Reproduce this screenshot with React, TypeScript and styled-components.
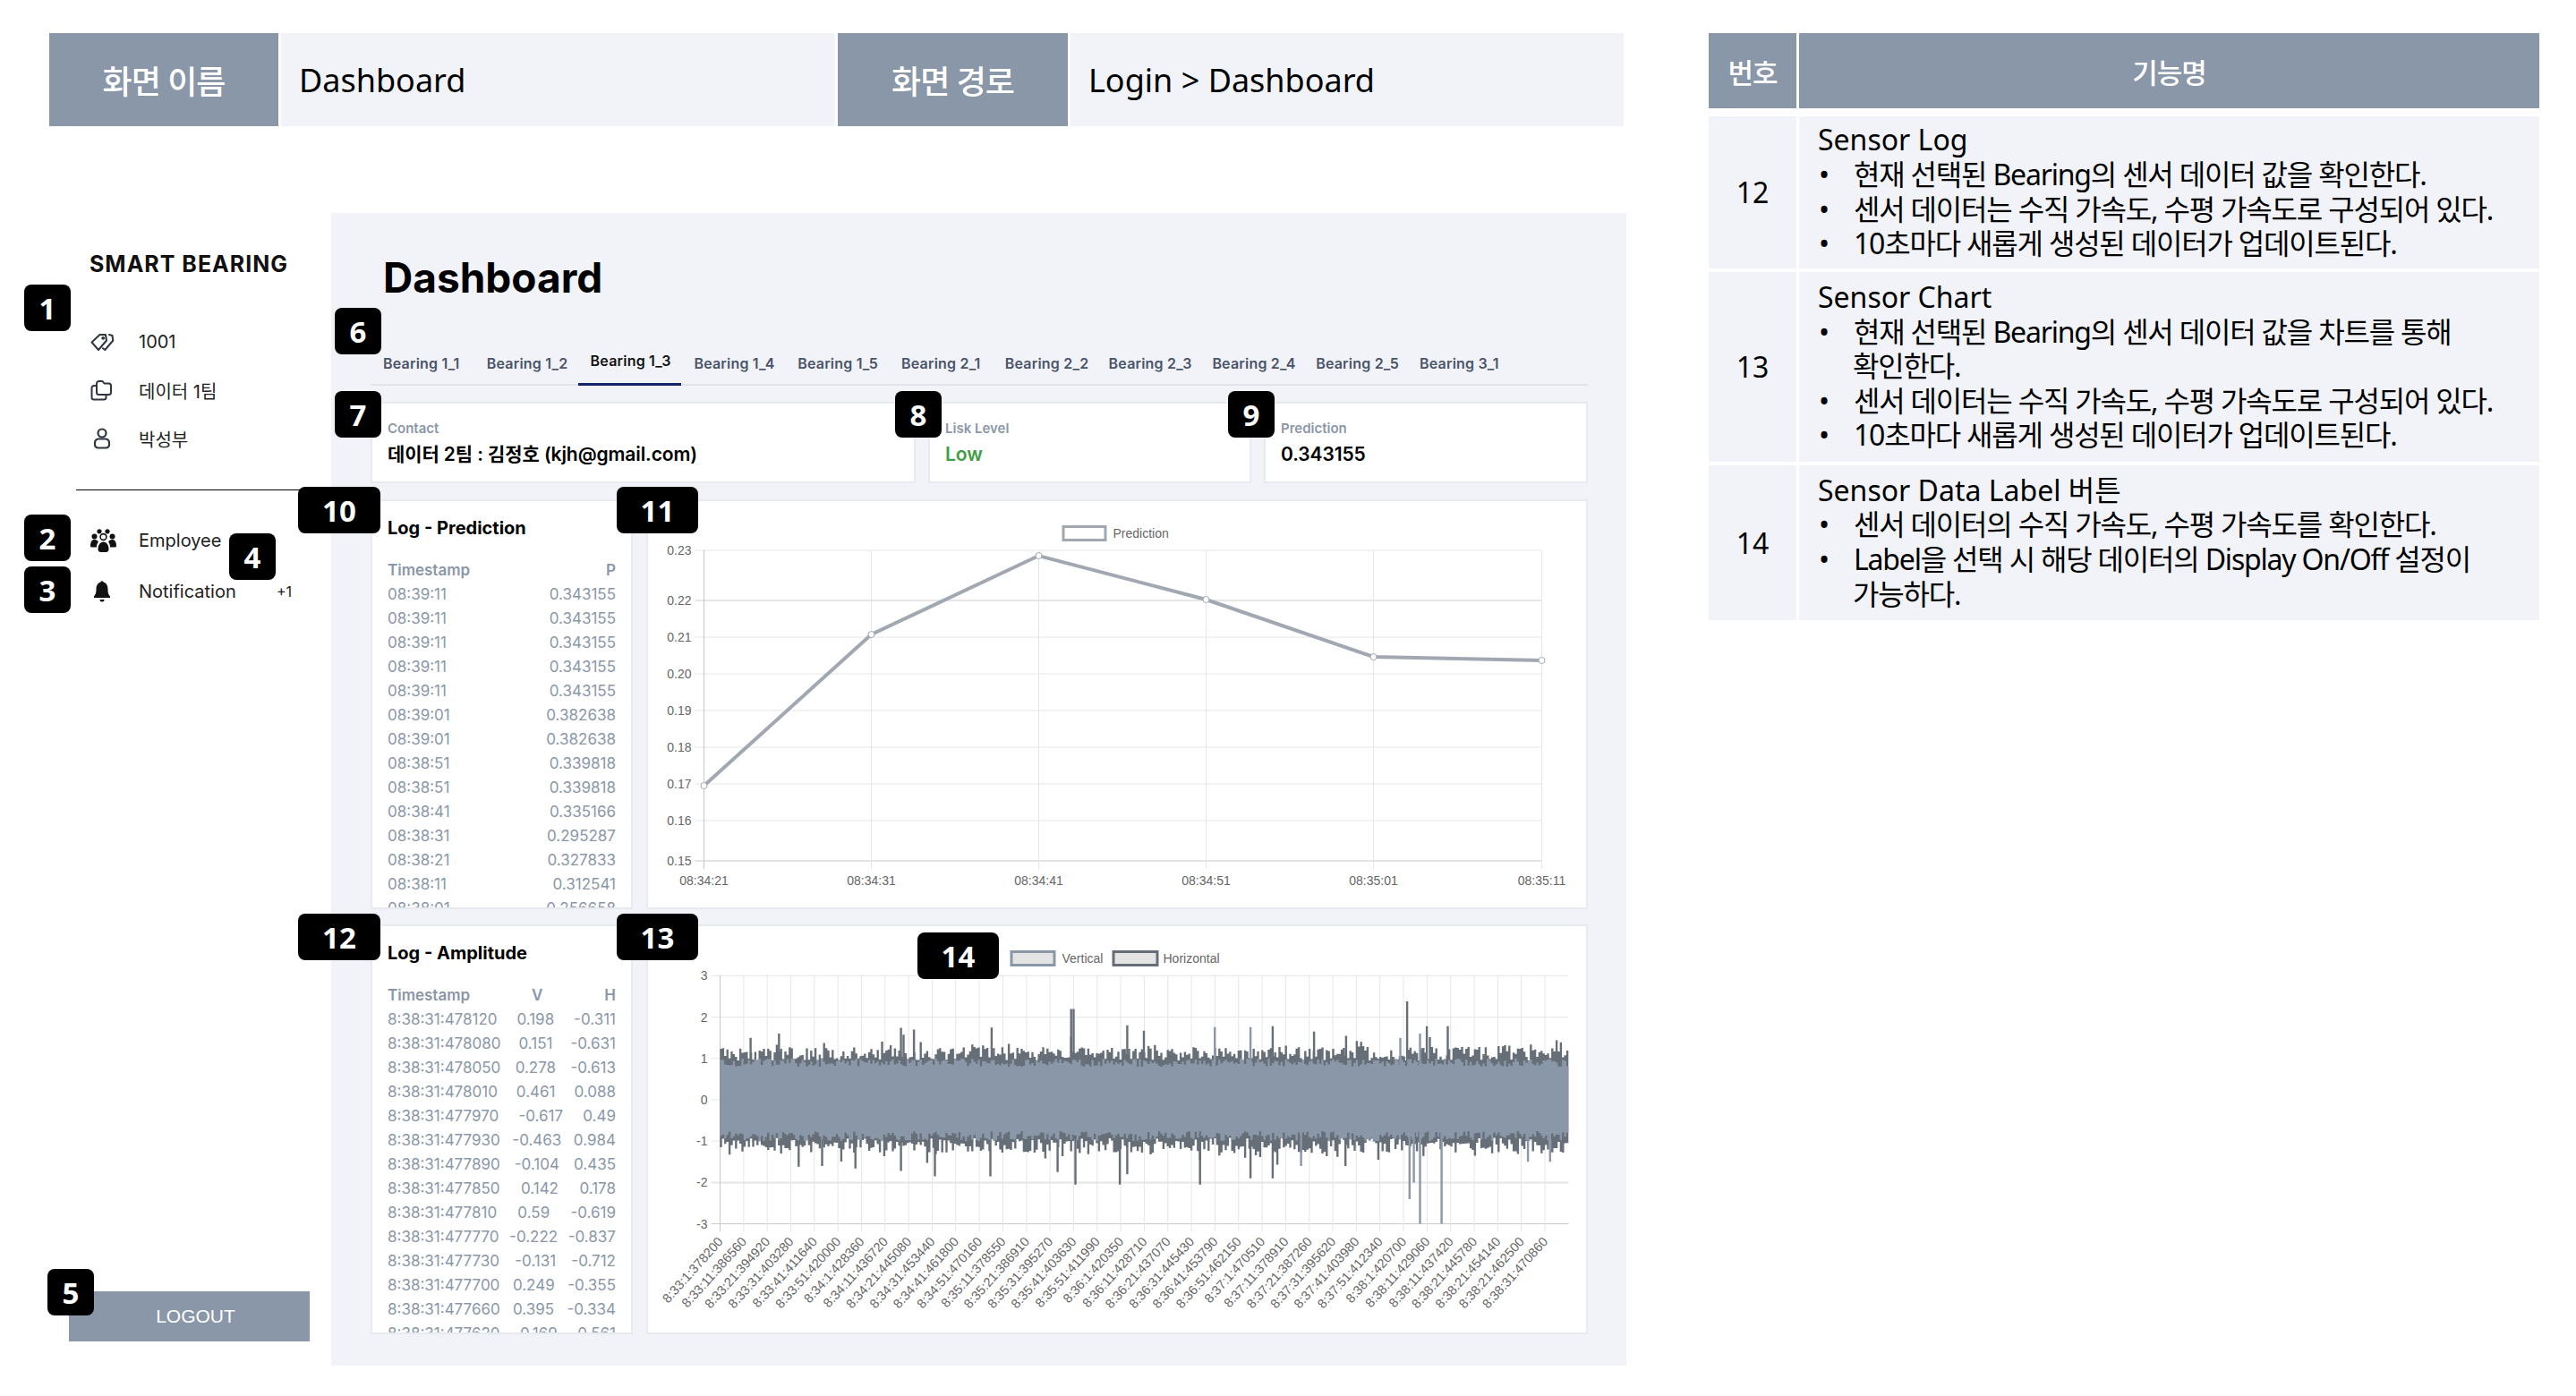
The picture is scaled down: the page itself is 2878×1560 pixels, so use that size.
import React from 'react'
import styled, { createGlobalStyle } from 'styled-components'

const GlobalStyle = createGlobalStyle`
  html, body {
    margin: 0;
    padding: 0;
    background: #ffffff;
  }
  * {
    box-sizing: border-box;
  }
`

const UI_FONT = `Inter, "Noto Sans CJK KR", sans-serif`
const DOC_FONT = `"Noto Sans", "Noto Sans CJK KR", sans-serif`
const SLATE = '#8a97a8'
const PALE = '#f1f3f9'

const Page = styled.div`
  position: relative;
  width: 2878px;
  height: 1560px;
  overflow: hidden;
  display: flex;
  gap: 93px;
  padding: 37px 41px 0 55px;
  background: #ffffff;
  color: #000000;
  font-family: ${UI_FONT};
`

const LeftColumn = styled.div`
  width: 1761px;
  display: flex;
  flex-direction: column;
`

const ScreenHeader = styled.div`
  display: grid;
  grid-template-columns: 256px 619px 257px 618px;
  gap: 3px;
  height: 104px;
`

const HeaderLabel = styled.div`
  background: ${SLATE};
  color: #ffffff;
  font-family: ${DOC_FONT};
  font-size: 36px;
  font-weight: 500;
  letter-spacing: -1px;
  display: flex;
  align-items: center;
  justify-content: center;
`

const HeaderValue = styled.div`
  background: ${PALE};
  font-family: ${DOC_FONT};
  font-size: 36px;
  padding-left: 20px;
  display: flex;
  align-items: center;
`

const Body = styled.div`
  margin-top: 97px;
  display: flex;
  height: 1288px;
`

const Sidebar = styled.aside`
  width: 315px;
  flex: none;
  display: flex;
  flex-direction: column;
  color: #222222;
`

const Logo = styled.div`
  margin: 47px 0 0 45px;
  font-size: 25px;
  line-height: 20px;
  font-weight: 700;
  letter-spacing: 1px;
  white-space: nowrap;
  color: #111111;
`

const InfoList = styled.div`
  margin: 50px 0 0 46px;
`

const SideRow = styled.div<{ $height: number }>`
  height: ${({ $height }) => $height}px;
  display: flex;
  align-items: center;
  font-size: 20px;
`

const IconSlot = styled.span`
  width: 54px;
  flex: none;
  display: flex;
  align-items: center;
`

const Divider = styled.div`
  height: 1px;
  margin: 30px 0 27px 30px;
  background: #000000;
`

const NavList = styled.nav`
  margin-left: 46px;
`

const Count = styled.span`
  margin-left: auto;
  margin-right: 44px;
  font-size: 16px;
`

const LogoutButton = styled.button`
  margin: auto 24px 27px 22px;
  height: 56px;
  padding: 0 0 0 14px;
  border: 0;
  background: ${SLATE};
  color: #ffffff;
  font-family: "Liberation Sans", sans-serif;
  font-size: 21px;
`

const Main = styled.main`
  flex: 1;
  background: ${PALE};
  padding: 44px 43px 0 44px;
  display: flex;
  flex-direction: column;
`

const Title = styled.h1`
  margin: 0;
  font-size: 46px;
  line-height: 56px;
  font-weight: 700;
  padding-left: 14px;
`

const Tabs = styled.div`
  margin-top: 44px;
  height: 49px;
  display: flex;
  border-bottom: 2px solid #e1e4e9;
`

const Tab = styled.div<{ $active?: boolean }>`
  width: 115.8px;
  flex: none;
  padding: ${({ $active }) => ($active ? '11px 0 0 14px' : '14px 0 0 14px')};
  height: ${({ $active }) => ($active ? '49px' : '47px')};
  font-size: 16px;
  line-height: 20px;
  font-weight: 600;
  letter-spacing: 0.2px;
  white-space: nowrap;
  color: ${({ $active }) => ($active ? '#111111' : '#4a5568')};
  border-bottom: ${({ $active }) => ($active ? '3px solid #14246a' : '0')};
`

const CardRow = styled.div`
  margin-top: 18px;
  display: flex;
  gap: 14px;
`

const InfoCard = styled.div<{ $width: number }>`
  width: ${({ $width }) => $width}px;
  height: 91px;
  background: #ffffff;
  border: 2px solid #e7eaef;
  padding: 19px 0 0 17px;
`

const InfoLabel = styled.div`
  font-size: 15px;
  line-height: 18px;
  font-weight: 600;
  color: ${SLATE};
`

const InfoValue = styled.div<{ $color?: string }>`
  margin-top: 7px;
  font-size: 21px;
  line-height: 26px;
  font-weight: 600;
  letter-spacing: -0.1px;
  color: ${({ $color }) => $color || '#000000'};
`

const PanelRow = styled.div<{ $top: number }>`
  margin-top: ${({ $top }) => $top}px;
  height: 458px;
  display: flex;
  gap: 15px;
`

const LogCard = styled.section`
  width: 293px;
  flex: none;
  background: #ffffff;
  border: 2px solid #e7eaef;
  padding: 17px 17px 0;
  overflow: hidden;
`

const LogTitle = styled.h2`
  margin: 0 0 21px;
  font-size: 20px;
  line-height: 26px;
  font-weight: 700;
`

const LogRow = styled.div<{ $head?: boolean }>`
  display: flex;
  justify-content: space-between;
  height: 27px;
  line-height: 27px;
  white-space: nowrap;
  font-size: 17px;
  font-weight: ${({ $head }) => ($head ? 600 : 400)};
  color: ${SLATE};
`

const ChartCard = styled.section`
  flex: 1;
  background: #ffffff;
  border: 2px solid #e7eaef;
  overflow: hidden;
`

const ChartSvg = styled.svg`
  display: block;
  width: 100%;
  height: 100%;
`

const AxisText = styled.text<{ $size?: number }>`
  font-family: "Liberation Sans", sans-serif;
  font-size: ${({ $size }) => $size || 14}px;
  fill: #666666;
`

const SpecColumn = styled.div`
  width: 928px;
  display: grid;
  grid-template-columns: 98px 827px;
  column-gap: 3px;
  row-gap: 4px;
  grid-template-rows: 88.5px 170px 212px 173px;
  font-family: ${DOC_FONT};
  align-content: start;
`

const SpecHead = styled.div`
  background: ${SLATE};
  color: #ffffff;
  font-size: 31px;
  font-weight: 500;
  letter-spacing: -1px;
  margin-bottom: 4.5px;
  display: flex;
  align-items: center;
  justify-content: center;
`

const SpecNumber = styled.div`
  background: ${PALE};
  font-size: 32px;
  display: flex;
  align-items: center;
  justify-content: center;
`

const SpecBody = styled.div`
  background: ${PALE};
  padding: 0 20px 0 21px;
  font-size: 32px;
  line-height: 38.6px;
  letter-spacing: -1.2px;
  word-break: keep-all;
  display: flex;
  flex-direction: column;
  justify-content: center;
`

const SpecTitle = styled.div`
  letter-spacing: 0;
`

const SpecList = styled.ul`
  margin: 0;
  padding: 0;
  list-style: none;
`

const SpecItem = styled.li`
  padding-left: 39px;
  text-indent: -39px;
  &::before {
    content: '•';
    display: inline-block;
    width: 39px;
    padding-left: 1px;
    text-indent: 0;
  }
`

const Badge = styled.div<{ $x: number; $y: number; $w?: number }>`
  position: absolute;
  left: ${({ $x }) => $x}px;
  top: ${({ $y }) => $y}px;
  width: ${({ $w }) => $w || 52}px;
  height: 52px;
  border-radius: 8px;
  background: #000000;
  color: #ffffff;
  font-family: "Noto Sans", sans-serif;
  font-size: 33px;
  font-weight: 700;
  display: flex;
  align-items: center;
  justify-content: center;
`

const badges = [
  { n: 1, x: 27, y: 318 },
  { n: 2, x: 27, y: 575 },
  { n: 3, x: 27, y: 633 },
  { n: 4, x: 256, y: 596 },
  { n: 5, x: 53, y: 1418 },
  { n: 6, x: 374, y: 344 },
  { n: 7, x: 374, y: 437 },
  { n: 8, x: 1000, y: 437 },
  { n: 9, x: 1372, y: 437, w: 52 },
  { n: 10, x: 333, y: 544, w: 92 },
  { n: 11, x: 689, y: 544, w: 91 },
  { n: 12, x: 333, y: 1021, w: 92 },
  { n: 13, x: 689, y: 1021, w: 91 },
  { n: 14, x: 1025, y: 1042, w: 91 },
]

const tabNames = [
  'Bearing 1_1',
  'Bearing 1_2',
  'Bearing 1_3',
  'Bearing 1_4',
  'Bearing 1_5',
  'Bearing 2_1',
  'Bearing 2_2',
  'Bearing 2_3',
  'Bearing 2_4',
  'Bearing 2_5',
  'Bearing 3_1',
]

const predictionRows = [
  ['08:39:11', '0.343155'],
  ['08:39:11', '0.343155'],
  ['08:39:11', '0.343155'],
  ['08:39:11', '0.343155'],
  ['08:39:11', '0.343155'],
  ['08:39:01', '0.382638'],
  ['08:39:01', '0.382638'],
  ['08:38:51', '0.339818'],
  ['08:38:51', '0.339818'],
  ['08:38:41', '0.335166'],
  ['08:38:31', '0.295287'],
  ['08:38:21', '0.327833'],
  ['08:38:11', '0.312541'],
  ['08:38:01', '0.256658'],
]

const amplitudeRows = [
  ['8:38:31:478120', '0.198', '-0.311'],
  ['8:38:31:478080', '0.151', '-0.631'],
  ['8:38:31:478050', '0.278', '-0.613'],
  ['8:38:31:478010', '0.461', '0.088'],
  ['8:38:31:477970', '-0.617', '0.49'],
  ['8:38:31:477930', '-0.463', '0.984'],
  ['8:38:31:477890', '-0.104', '0.435'],
  ['8:38:31:477850', '0.142', '0.178'],
  ['8:38:31:477810', '0.59', '-0.619'],
  ['8:38:31:477770', '-0.222', '-0.837'],
  ['8:38:31:477730', '-0.131', '-0.712'],
  ['8:38:31:477700', '0.249', '-0.355'],
  ['8:38:31:477660', '0.395', '-0.334'],
  ['8:38:31:477620', '0.169', '0.561'],
]

const ampLabels = [
  '8:33:1:378200', '8:33:11:386560', '8:33:21:394920', '8:33:31:403280', '8:33:41:411640', '8:33:51:420000',
  '8:34:1:428360', '8:34:11:436720', '8:34:21:445080', '8:34:31:453440', '8:34:41:461800', '8:34:51:470160',
  '8:35:11:378550', '8:35:21:386910', '8:35:31:395270', '8:35:41:403630', '8:35:51:411990', '8:36:1:420350',
  '8:36:11:428710', '8:36:21:437070', '8:36:31:445430', '8:36:41:453790', '8:36:51:462150', '8:37:1:470510',
  '8:37:11:378910', '8:37:21:387260', '8:37:31:395620', '8:37:41:403980', '8:37:51:412340', '8:38:1:420700',
  '8:38:11:429060', '8:38:11:437420', '8:38:21:445780', '8:38:21:454140', '8:38:21:462500', '8:38:31:470860',
]

// y ticks are unevenly spaced in the reference, so they are listed by pixel
const predictionTicks: [string, number][] = [
  ['0.23', 615],
  ['0.22', 671],
  ['0.21', 712],
  ['0.20', 753],
  ['0.19', 794],
  ['0.18', 835],
  ['0.17', 876],
  ['0.16', 917],
  ['0.15', 962],
]

const predictionTimes: [string, number, number][] = [
  ['08:34:21', 786, 878],
  ['08:34:31', 973, 709],
  ['08:34:41', 1160, 621],
  ['08:34:51', 1347, 670],
  ['08:35:01', 1534, 734],
  ['08:35:11', 1722, 738],
]

const PredictionChart = () => (
  <ChartSvg viewBox="724 560 1047 454">
    {predictionTicks.map(([label, y]) => (
      <g key={label}>
        <line x1={776} x2={1722} y1={y} y2={y} stroke={y === 962 ? '#c8c8c8' : '#e6e6e6'} strokeWidth={label === '0.22' ? 2 : 1} />
        <AxisText x={772} y={y + 5} textAnchor="end">
          {label}
        </AxisText>
      </g>
    ))}
    {predictionTimes.map(([label, x], i) => (
      <g key={label}>
        <line x1={x} x2={x} y1={615} y2={971} stroke={i === 0 ? '#c8c8c8' : '#e6e6e6'} />
        <AxisText x={x} y={989} textAnchor="middle">
          {label}
        </AxisText>
      </g>
    ))}
    <rect x={1187.5} y={588.5} width={47} height={15} fill="#ffffff" stroke="#a1a8b2" strokeWidth={3} />
    <AxisText x={1243} y={601}>
      Prediction
    </AxisText>
    <polyline
      points={predictionTimes.map(([, x, y]) => `${x},${y}`).join(' ')}
      fill="none"
      stroke="#a1a8b2"
      strokeWidth={4}
    />
    {predictionTimes.map(([label, x, y]) => (
      <circle key={label} cx={x} cy={y} r={3.5} fill="#ffffff" stroke="#a1a8b2" />
    ))}
  </ChartSvg>
)

const ampY = (v: number) => 1229 - v * 46.2
const zoomX = (z: number) => 710 + z / 1.452

// small seeded generator so the wave looks the same on every load
const seeded = (seed: number) => () => {
  seed = (seed + 0x6d2b79f5) | 0
  let t = Math.imul(seed ^ (seed >>> 15), 1 | seed)
  t = (t + Math.imul(t ^ (t >>> 7), 61 | t)) ^ t
  return ((t ^ (t >>> 14)) >>> 0) / 4294967296
}

const buildWave = () => {
  const r = seeded(41)
  let dark = ''
  let light = ''
  for (let x = 805; x <= 1751; x += 2.4) {
    const hTop = 0.95 + r() * 0.33 + (r() < 0.14 ? r() * 0.3 : 0)
    const hBottom = 0.92 + r() * 0.36 + (r() < 0.14 ? r() * 0.35 : 0)
    const vTop = 0.8 + r() * 0.2
    const vBottom = 0.76 + r() * 0.24
    dark += `M${x.toFixed(1)} ${ampY(hTop).toFixed(1)}V${ampY(-hBottom).toFixed(1)}`
    light += `M${x.toFixed(1)} ${ampY(vTop).toFixed(1)}V${ampY(-vBottom).toFixed(1)}`
  }
  return { dark, light }
}

const wave = buildWave()

const darkSpikes: [number, number][] = [
  [706, 2.2], [710, 2.2], [1251, 2.38], [430, 1.74], [451, 1.7], [577, 1.75], [797, 1.8], [824, 1.67],
  [1033, 1.78], [1283, 1.78], [1317, 1.78], [1100, 1.65], [1152, 1.55], [186, 1.5], [232, 1.6],
  [264, -1.62], [302, -1.6], [356, -1.66], [430, -1.72], [485, -1.85], [575, -1.85], [684, -1.75],
  [713, -2.05], [785, -2.05], [797, -1.8], [915, -2.05], [997, -1.9], [1033, -1.9], [1151, -1.6],
]

const lightSpikes: [number, number][] = [
  [939, 1.76], [997, 1.76], [1240, 1.5], [1272, 1.6], [1255, -2.4], [1262, -2], [1272, -3], [1307, -3],
  [1079, -1.6], [1447, -1.5], [1483, -1.5],
]

const spikePath = (list: [number, number][]) =>
  list.map(([z, v]) => `M${zoomX(z).toFixed(1)} ${ampY(0)}V${ampY(v).toFixed(1)}`).join('')

const AmplitudeChart = () => (
  <ChartSvg viewBox="724 1035 1047 454">
    {[3, 2, 1, 0, -1, -2, -3].map((v) => (
      <g key={v}>
        <line x1={794} x2={1752} y1={ampY(v)} y2={ampY(v)} stroke={v === -3 ? '#c8c8c8' : '#e6e6e6'} strokeWidth={v === -2 ? 2 : 1} />
        <AxisText x={790} y={ampY(v) + 5} textAnchor="end">
          {v}
        </AxisText>
      </g>
    ))}
    {ampLabels.map((label, i) => {
      const x = 804 + i * 26.33
      return (
        <g key={label + i}>
          <line x1={x} x2={x} y1={1090} y2={1376} stroke={i === 0 ? '#c8c8c8' : '#e6e6e6'} />
          <AxisText $size={14.5} x={x + 4} y={1388} textAnchor="end" transform={`rotate(-48 ${x + 4} 1388)`}>
            {label}
          </AxisText>
        </g>
      )
    })}
    <path d={wave.dark} stroke="#666e78" strokeWidth={2.4} fill="none" />
    <path d={spikePath(darkSpikes)} stroke="#666e78" strokeWidth={2.4} fill="none" />
    <path d={wave.light} stroke={SLATE} strokeWidth={2.4} fill="none" />
    <path d={spikePath(lightSpikes)} stroke={SLATE} strokeWidth={2.4} fill="none" />
    <rect x={1129.5} y={1063.5} width={48} height={15} fill="#e4e4e4" stroke={SLATE} strokeWidth={3} />
    <AxisText x={1186} y={1076}>
      Vertical
    </AxisText>
    <rect x={1243.5} y={1063.5} width={49} height={15} fill="#e4e4e4" stroke="#666e78" strokeWidth={3} />
    <AxisText x={1299} y={1076}>
      Horizontal
    </AxisText>
  </ChartSvg>
)

const TagsIcon = () => (
  <svg width="27" height="22" viewBox="0 0 27 22" fill="none" stroke="#2f3640" strokeWidth="2" strokeLinejoin="round" strokeLinecap="round">
    <path d="M1.500 11.500 10.500 3h6.500l1 6.500-9 10.500z" />
    <circle cx="14.200" cy="6.800" r="0.900" />
    <path d="M21 3l3.500 1 .8 5.500-9 10.500-2.300-1.800" />
  </svg>
)

const FoldersIcon = () => (
  <svg width="25" height="24" viewBox="0 0 25 24" fill="none" stroke="#2f3640" strokeWidth="2" strokeLinejoin="round" strokeLinecap="round">
    <path d="M7 4.500A2.500 2.500 0 0 1 9.500 2h4l2 2.500h5A2.500 2.500 0 0 1 23 7v7.500a2.500 2.500 0 0 1-2.500 2.500h-11A2.500 2.500 0 0 1 7 14.500z" />
    <path d="M7 7H4a2.500 2.500 0 0 0-2.500 2.500V20A2.500 2.500 0 0 0 4 22.500h11a2.500 2.500 0 0 0 2.500-2.500v-3" />
  </svg>
)

const PersonIcon = () => (
  <svg width="26" height="24" viewBox="0 0 26 24" fill="none" stroke="#2f3640" strokeWidth="2.200" strokeLinejoin="round">
    <circle cx="13" cy="6" r="4.500" />
    <path d="M8.500 12.500h9A4.500 4.500 0 0 1 21 17v2a3.500 3.500 0 0 1-3.500 3.500h-9A3.500 3.500 0 0 1 5 19v-2a4.500 4.500 0 0 1 3.500-4.500z" />
  </svg>
)

const TeamIcon = () => (
  <svg width="29" height="26" viewBox="0 0 29 26" fill="#111111">
    <circle cx="10" cy="2.800" r="2.600" />
    <circle cx="19" cy="2.800" r="2.600" />
    <circle cx="4.500" cy="8.500" r="3" />
    <circle cx="24.500" cy="8.500" r="3" />
    <circle cx="14.500" cy="9" r="3.400" fill="none" stroke="#111111" strokeWidth="1.600" />
    <path d="M0 19c0-4.500 2-7 4.500-7s3.500 1 4.500 2.500C7.500 16 7 18.500 7 20.500H1.500A1.500 1.500 0 0 1 0 19z" />
    <path d="M29 19c0-4.500-2-7-4.500-7s-3.500 1-4.500 2.500c1.500 1.500 2 4 2 6h5.500a1.500 1.500 0 0 0 1.500-1.500z" />
    <path d="M8.500 23c0-5 2.500-8.500 6-8.500s6 3.500 6 8.500c0 1.500-1 3-3 3h-6c-2 0-3-1.500-3-3z" />
  </svg>
)

const BellIcon = () => (
  <svg width="26" height="24" viewBox="0 0 26 24" fill="#111111">
    <circle cx="13" cy="2" r="1.800" />
    <path d="M13 1.500c-4.500 0-6.500 3.500-6.500 8 0 4.500-1 6-2.500 8v1.500h18V17.500c-1.500-2-2.500-3.500-2.500-8 0-4.500-2-8-6.500-8z" />
    <path d="M10.500 21h5a2.500 2.500 0 0 1-5 0z" />
  </svg>
)

const App: React.FC = () => (
  <Page>
    <GlobalStyle />
    <LeftColumn>
      <ScreenHeader>
        <HeaderLabel>화면 이름</HeaderLabel>
        <HeaderValue>Dashboard</HeaderValue>
        <HeaderLabel>화면 경로</HeaderLabel>
        <HeaderValue>Login &gt; Dashboard</HeaderValue>
      </ScreenHeader>
      <Body>
        <Sidebar>
          <Logo>SMART BEARING</Logo>
          <InfoList>
            <SideRow $height={54}>
              <IconSlot>
                <TagsIcon />
              </IconSlot>
              1001
            </SideRow>
            <SideRow $height={54}>
              <IconSlot>
                <FoldersIcon />
              </IconSlot>
              데이터 1팀
            </SideRow>
            <SideRow $height={54}>
              <IconSlot>
                <PersonIcon />
              </IconSlot>
              박성부
            </SideRow>
          </InfoList>
          <Divider />
          <NavList>
            <SideRow $height={57}>
              <IconSlot>
                <TeamIcon />
              </IconSlot>
              Employee
            </SideRow>
            <SideRow $height={57}>
              <IconSlot>
                <BellIcon />
              </IconSlot>
              Notification
              <Count>+1</Count>
            </SideRow>
          </NavList>
          <LogoutButton>LOGOUT</LogoutButton>
        </Sidebar>
        <Main>
          <Title>Dashboard</Title>
          <Tabs>
            {tabNames.map((name) => (
              <Tab key={name} $active={name === 'Bearing 1_3'}>
                {name}
              </Tab>
            ))}
          </Tabs>
          <CardRow>
            <InfoCard $width={609}>
              <InfoLabel>Contact</InfoLabel>
              <InfoValue>데이터 2팀 : 김정호 (kjh@gmail.com)</InfoValue>
            </InfoCard>
            <InfoCard $width={361}>
              <InfoLabel>Lisk Level</InfoLabel>
              <InfoValue $color="#3f9e44">Low</InfoValue>
            </InfoCard>
            <InfoCard $width={362}>
              <InfoLabel>Prediction</InfoLabel>
              <InfoValue>0.343155</InfoValue>
            </InfoCard>
          </CardRow>
          <PanelRow $top={18}>
            <LogCard>
              <LogTitle>Log - Prediction</LogTitle>
              <LogRow $head>
                <span>Timestamp</span>
                <span>P</span>
              </LogRow>
              {predictionRows.map((row, i) => (
                <LogRow key={i}>
                  <span>{row[0]}</span>
                  <span>{row[1]}</span>
                </LogRow>
              ))}
            </LogCard>
            <ChartCard>
              <PredictionChart />
            </ChartCard>
          </PanelRow>
          <PanelRow $top={17}>
            <LogCard>
              <LogTitle>Log - Amplitude</LogTitle>
              <LogRow $head>
                <span>Timestamp</span>
                <span>V</span>
                <span>H</span>
              </LogRow>
              {amplitudeRows.map((row, i) => (
                <LogRow key={i}>
                  <span>{row[0]}</span>
                  <span>{row[1]}</span>
                  <span>{row[2]}</span>
                </LogRow>
              ))}
            </LogCard>
            <ChartCard>
              <AmplitudeChart />
            </ChartCard>
          </PanelRow>
        </Main>
      </Body>
    </LeftColumn>
    <SpecColumn>
      <SpecHead>번호</SpecHead>
      <SpecHead>기능명</SpecHead>
      <SpecNumber>12</SpecNumber>
      <SpecBody>
        <SpecTitle>Sensor Log</SpecTitle>
        <SpecList>
          <SpecItem>현재 선택된 Bearing의 센서 데이터 값을 확인한다.</SpecItem>
          <SpecItem>센서 데이터는 수직 가속도, 수평 가속도로 구성되어 있다.</SpecItem>
          <SpecItem>10초마다 새롭게 생성된 데이터가 업데이트된다.</SpecItem>
        </SpecList>
      </SpecBody>
      <SpecNumber>13</SpecNumber>
      <SpecBody>
        <SpecTitle>Sensor Chart</SpecTitle>
        <SpecList>
          <SpecItem>현재 선택된 Bearing의 센서 데이터 값을 차트를 통해 확인한다.</SpecItem>
          <SpecItem>센서 데이터는 수직 가속도, 수평 가속도로 구성되어 있다.</SpecItem>
          <SpecItem>10초마다 새롭게 생성된 데이터가 업데이트된다.</SpecItem>
        </SpecList>
      </SpecBody>
      <SpecNumber>14</SpecNumber>
      <SpecBody>
        <SpecTitle>Sensor Data Label 버튼</SpecTitle>
        <SpecList>
          <SpecItem>센서 데이터의 수직 가속도, 수평 가속도를 확인한다.</SpecItem>
          <SpecItem>Label을 선택 시 해당 데이터의 Display On/Off 설정이 가능하다.</SpecItem>
        </SpecList>
      </SpecBody>
    </SpecColumn>
    {badges.map((b) => (
      <Badge key={b.n} $x={b.x} $y={b.y} $w={b.w}>
        {b.n}
      </Badge>
    ))}
  </Page>
)

export default App
